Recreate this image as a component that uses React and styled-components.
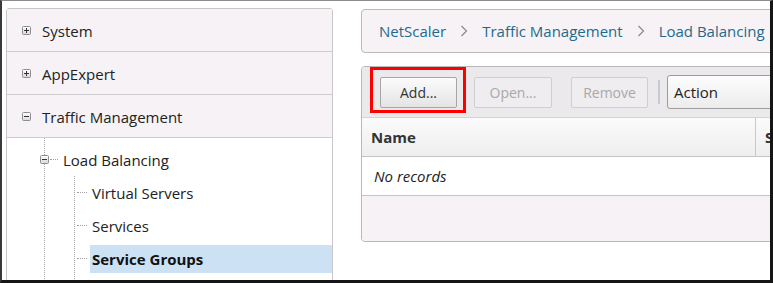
import React from "react";
import styled, { createGlobalStyle } from "styled-components";

const GlobalStyle = createGlobalStyle`
  html, body { margin: 0; padding: 0; background: #fff; }
  body { font-family: "Open Sans", "Noto Sans", "DejaVu Sans", sans-serif; }
  * { box-sizing: border-box; }
`;

const Frame = styled.div`
  width: 773px;
  height: 283px;
  overflow: hidden;
  background: #fff;
  border-top: 1px solid #8c8c8c;
  border-left: 2px solid #3a3a3a;
  border-right: 3px solid #151515;
  border-bottom: 3px solid #151515;
  display: flex;
  align-items: flex-start;
  padding: 7px 0 0 4px;
  gap: 28px;
`;

const NavPanel = styled.div`
  flex: none;
  width: 327px;
  height: 320px;
  border: 1px solid #c9c6c9;
  border-radius: 3px 3px 0 0;
  display: flex;
  flex-direction: column;
  background: #fff;
`;

const NavRow = styled.div`
  height: 43px;
  flex: none;
  display: flex;
  align-items: center;
  gap: 11px;
  padding-left: 15px;
  padding-top: 1px;
  background: #f6f2f6;
  border-bottom: 1px solid #cfcccf;
  font-size: 15px;
  color: #222;
`;

const Toggle = ({ open }) => (
  <svg width="9" height="9" viewBox="0 0 9 9" style={{ flex: "none" }}>
    <defs>
      <linearGradient id={open ? "tgm" : "tgp"} x1="0" y1="0" x2="0" y2="1">
        <stop offset="0" stopColor="#ffffff" />
        <stop offset="1" stopColor="#d8d8d8" />
      </linearGradient>
    </defs>
    <rect x="0.5" y="0.5" width="8" height="8" rx="1" fill={`url(#${open ? "tgm" : "tgp"})`} stroke="#8e8e8e" />
    <rect x="2" y="4" width="5" height="1" fill="#333" />
    {!open && <rect x="4" y="2" width="1" height="5" fill="#333" />}
  </svg>
);

const Branch = styled.div`
  margin-left: ${(p) => p.$indent}px;
  border-left: 1px dotted #a9a9a9;
  display: flex;
  flex-direction: column;
  flex: 1;
  padding-top: ${(p) => p.$top || 0}px;
`;

const TreeItem = styled.div`
  height: 33px;
  display: flex;
  align-items: center;
  font-size: 15px;
  color: #222;
`;

const Connector = styled.span`
  flex: none;
  width: ${(p) => p.$w}px;
  margin-left: ${(p) => p.$ml || 0}px;
  margin-right: ${(p) => p.$mr || 0}px;
  border-top: 1px dotted #a0a0a0;
`;

const ToggleWrap = styled.span`
  flex: none;
  display: flex;
  margin-left: -5px;
  margin-right: 1px;
`;

const Label = styled.span`
  flex: 1;
  height: 28px;
  display: flex;
  align-items: center;
  padding-left: 2px;
  font-weight: ${(p) => (p.$selected ? 700 : 400)};
  background: ${(p) => (p.$selected ? "#cde1f5" : "transparent")};
  color: ${(p) => (p.$selected ? "#111" : "#222")};
`;

const Main = styled.div`
  flex: none;
  width: 520px;
  display: flex;
  flex-direction: column;
  gap: 13px;
  padding-top: 1px;
`;

const Breadcrumb = styled.div`
  height: 44px;
  border: 1px solid #bcbabc;
  border-radius: 4px;
  background: #f6f2f6;
  display: flex;
  align-items: center;
  padding-left: 17px;
  gap: 14px;
  font-size: 15px;
  color: #1f6a8c;
  white-space: nowrap;
`;

const Crumb = styled.span``;

const Chevron = () => (
  <svg width="8" height="12" viewBox="0 0 8 12">
    <path d="M1.5 1 L6.5 6 L1.5 11" fill="none" stroke="#8a8a8a" strokeWidth="1.2" />
  </svg>
);

const Grid = styled.div`
  border: 1px solid #b9b7b9;
  border-radius: 4px;
  overflow: hidden;
  display: flex;
  flex-direction: column;
  background: #f6f2f6;
`;

const Toolbar = styled.div`
  height: 50px;
  background: #ebe9eb;
  display: flex;
  align-items: center;
  padding-left: 18px;
`;

const ButtonWrap = styled.span`
  position: relative;
  display: flex;
  margin-right: ${(p) => p.$mr}px;
  &::after {
    content: "";
    display: ${(p) => (p.$highlight ? "block" : "none")};
    position: absolute;
    left: -10px;
    top: -10px;
    right: -9px;
    bottom: -5px;
    border: 3px solid #f00;
  }
`;

const Button = styled.button`
  width: ${(p) => p.$w}px;
  height: 31px;
  font-family: inherit;
  font-size: 14px;
  border-radius: 2px;
  border: 1px solid ${(p) => (p.disabled ? "#cfcfcf" : "#a6a6a6")};
  background: ${(p) =>
    p.disabled ? "#efedef" : "linear-gradient(#fbfbfb, #e4e4e4)"};
  color: ${(p) => (p.disabled ? "#a8a8a8" : "#333")};
  padding: 0;
`;

const Separator = styled.span`
  width: 2px;
  height: 24px;
  background: #c6ccd2;
  margin-right: 7px;
`;

const Select = styled.div`
  width: 140px;
  height: 34px;
  border: 1px solid #9c9c9c;
  border-radius: 3px;
  background: linear-gradient(#fdfdfd, #ececec);
  display: flex;
  align-items: center;
  padding-left: 6px;
  font-size: 15px;
  color: #222;
`;

const HeaderRow = styled.div`
  height: 40px;
  display: flex;
  background: linear-gradient(#fbfbfb, #eeeeee);
  border-top: 1px solid #d4d4d4;
  border-bottom: 1px solid #c4c4c4;
`;

const HeaderCell = styled.div`
  width: ${(p) => p.$w}px;
  flex: none;
  display: flex;
  align-items: center;
  padding-left: 9px;
  font-size: 15px;
  font-weight: 700;
  color: #333;
  border-right: ${(p) => (p.$divider ? "1px solid #c8c8c8" : "none")};
`;

const EmptyRow = styled.div`
  height: 39px;
  background: #fff;
  display: flex;
  align-items: center;
  padding-left: 12px;
  font-size: 15px;
  font-style: italic;
  color: #222;
  border-bottom: 1px solid #c4c4c4;
`;

const Footer = styled.div`
  height: 45px;
  background: #f6f2f6;
`;

export default function App() {
  return (
    <>
      <GlobalStyle />
      <Frame>
        <NavPanel>
          <NavRow>
            <Toggle />
            System
          </NavRow>
          <NavRow>
            <Toggle />
            AppExpert
          </NavRow>
          <NavRow>
            <Toggle open />
            Traffic Management
          </NavRow>
          <Branch $indent={37} $top={5}>
            <TreeItem>
              <ToggleWrap>
                <Toggle open />
              </ToggleWrap>
              <Connector $w={8} $mr={3} />
              <Label>Load Balancing</Label>
            </TreeItem>
            <Branch $indent={29}>
              <TreeItem>
                <Connector $w={10} $ml={2} $mr={3} />
                <Label>Virtual Servers</Label>
              </TreeItem>
              <TreeItem>
                <Connector $w={10} $ml={2} $mr={3} />
                <Label>Services</Label>
              </TreeItem>
              <TreeItem>
                <Connector $w={10} $ml={2} $mr={3} />
                <Label $selected>Service Groups</Label>
              </TreeItem>
            </Branch>
          </Branch>
        </NavPanel>
        <Main>
          <Breadcrumb>
            <Crumb>NetScaler</Crumb>
            <Chevron />
            <Crumb>Traffic Management</Crumb>
            <Chevron />
            <Crumb>Load Balancing</Crumb>
          </Breadcrumb>
          <Grid>
            <Toolbar>
              <ButtonWrap $highlight $mr={17}>
                <Button $w={77}>Add...</Button>
              </ButtonWrap>
              <ButtonWrap $mr={19}>
                <Button $w={78} disabled>Open...</Button>
              </ButtonWrap>
              <ButtonWrap $mr={10}>
                <Button $w={77} disabled>Remove</Button>
              </ButtonWrap>
              <Separator />
              <Select>Action</Select>
            </Toolbar>
            <HeaderRow>
              <HeaderCell $w={394} $divider>Name</HeaderCell>
              <HeaderCell $w={100}>S</HeaderCell>
            </HeaderRow>
            <EmptyRow>No records</EmptyRow>
            <Footer />
          </Grid>
        </Main>
      </Frame>
    </>
  );
}
